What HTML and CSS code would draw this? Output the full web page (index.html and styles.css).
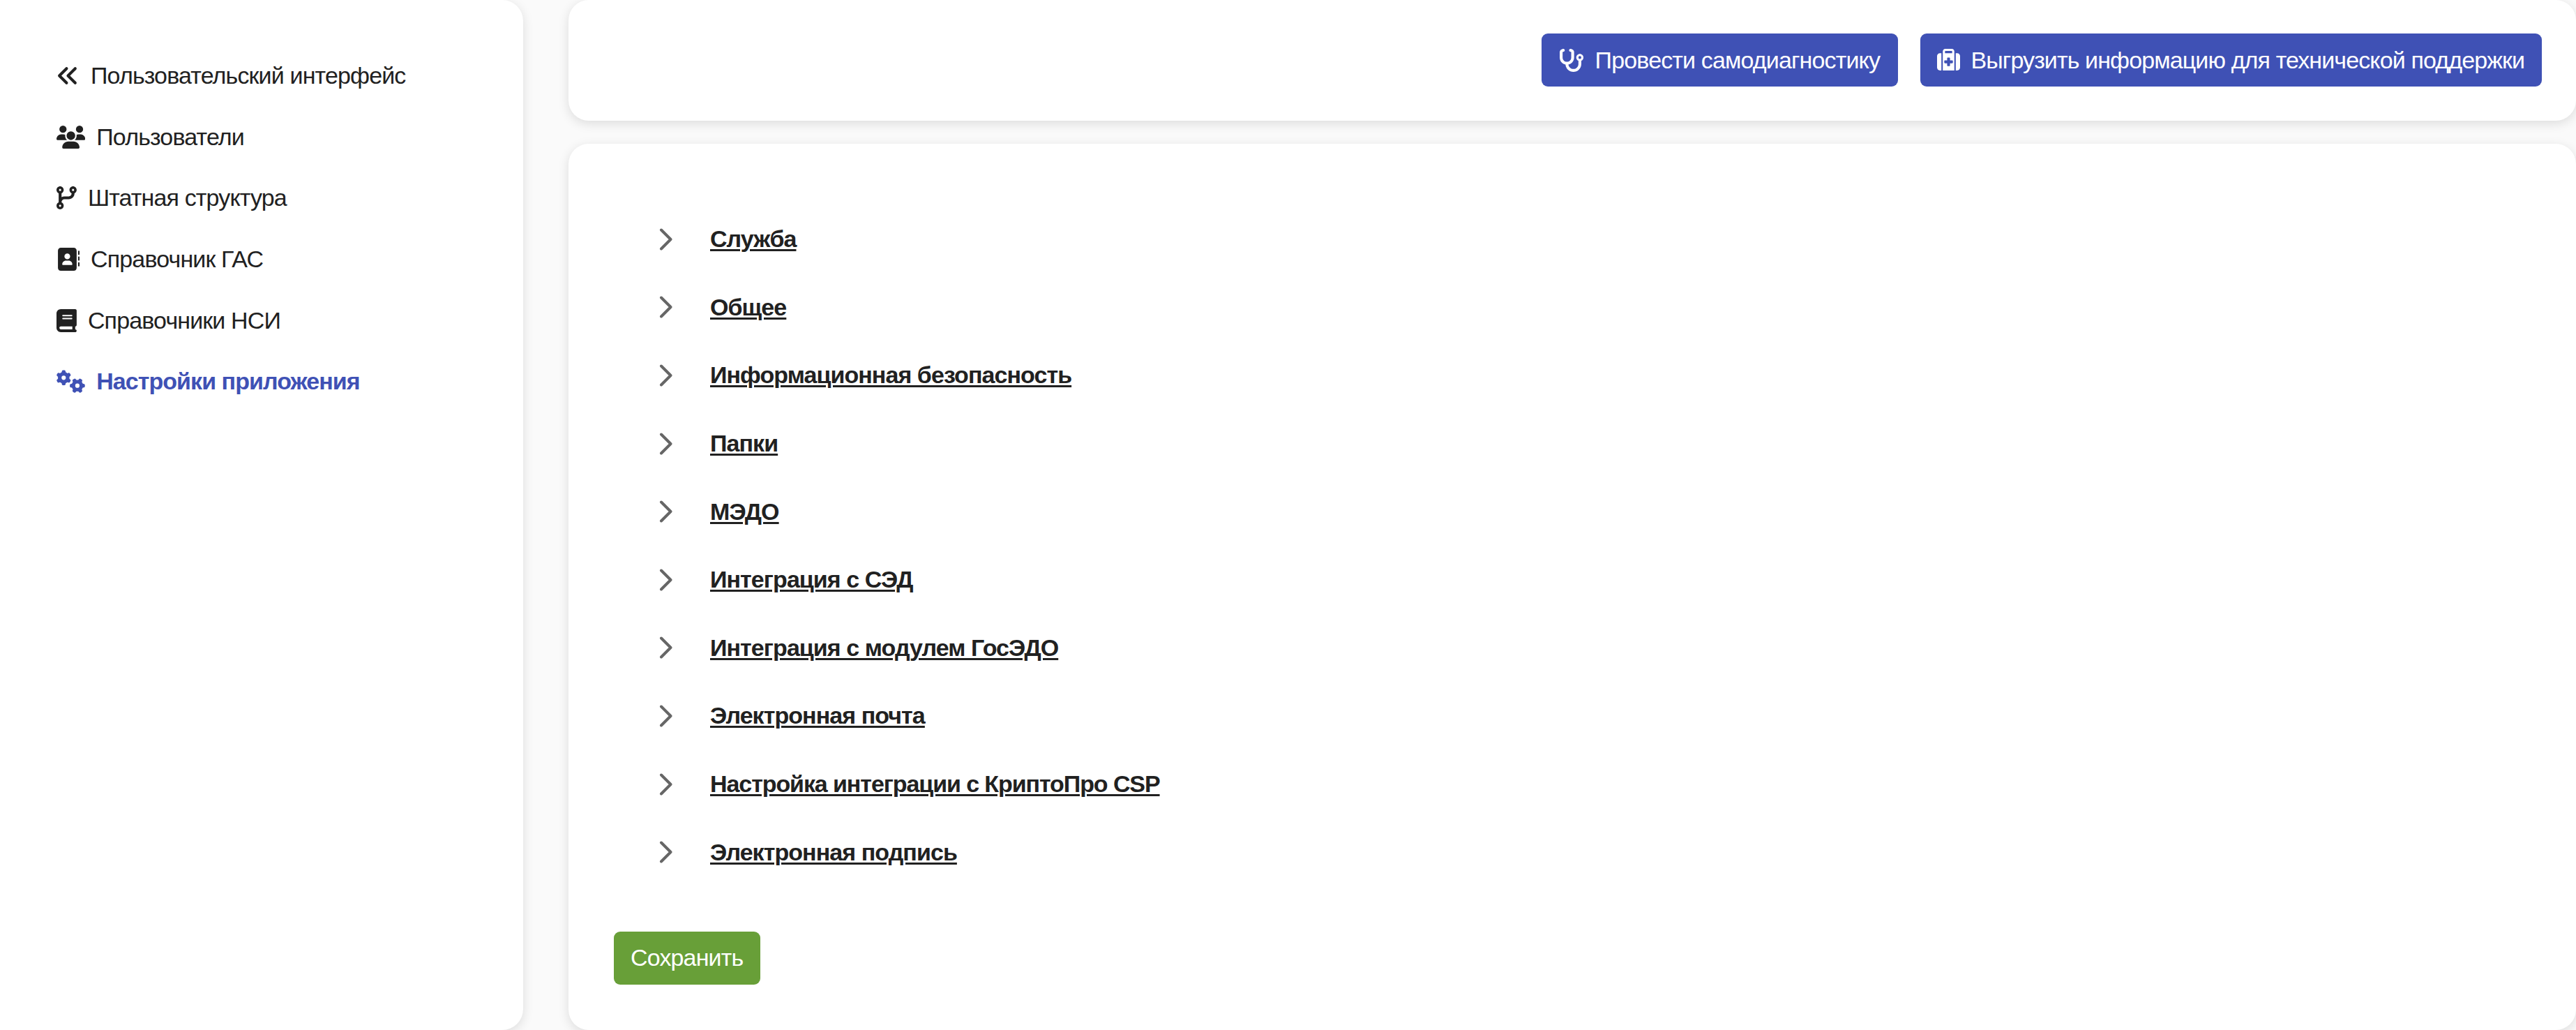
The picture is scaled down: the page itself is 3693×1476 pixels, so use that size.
FILE: index.html
```html
<!DOCTYPE html>
<html lang="ru">
<head>
<meta charset="utf-8">
<title>Настройки приложения</title>
<link rel="stylesheet" href="styles.css">
</head>
<body>
<div class="app">
  <nav class="sidebar">
    <a class="nav-item"><svg class="icon" viewBox="0 0 512 512"><path d="M41.4 233.4c-12.5 12.5-12.5 32.8 0 45.3l160 160c12.5 12.5 32.8 12.5 45.3 0s12.5-32.8 0-45.3L109.3 256 246.6 118.6c12.5-12.5 12.5-32.8 0-45.3s-32.8-12.5-45.3 0l-160 160zm352-160l-160 160c-12.5 12.5-12.5 32.8 0 45.3l160 160c12.5 12.5 32.8 12.5 45.3 0s12.5-32.8 0-45.3L301.3 256 438.6 118.6c12.5-12.5 12.5-32.8 0-45.3s-32.8-12.5-45.3 0z"/></svg><span>Пользовательский интерфейс</span></a>
    <a class="nav-item"><svg class="icon icon-wide" viewBox="0 0 640 512"><path d="M144 0a80 80 0 1 1 0 160A80 80 0 1 1 144 0zM512 0a80 80 0 1 1 0 160A80 80 0 1 1 512 0zM0 298.7C0 239.8 47.8 192 106.7 192h42.7c15.9 0 31 3.5 44.6 9.7c-1.3 7.2-1.9 14.7-1.9 22.3c0 38.2 16.8 72.5 43.3 96c-.2 0-.4 0-.7 0H21.3C9.6 320 0 310.4 0 298.7zM405.3 320c-.2 0-.4 0-.7 0c26.6-23.5 43.3-57.8 43.3-96c0-7.6-.7-15-1.9-22.3c13.6-6.3 28.7-9.7 44.6-9.7h42.7C592.2 192 640 239.8 640 298.7c0 11.8-9.6 21.3-21.3 21.3H405.3zM224 224a96 96 0 1 1 192 0 96 96 0 1 1 -192 0zM128 485.3C128 411.7 187.7 352 261.3 352H378.7C452.3 352 512 411.7 512 485.3c0 14.7-11.9 26.7-26.7 26.7H154.7c-14.7 0-26.7-11.9-26.7-26.7z"/></svg><span>Пользователи</span></a>
    <a class="nav-item"><svg class="icon icon-narrow" viewBox="0 0 448 512"><path d="M80 104a24 24 0 1 0 0-48 24 24 0 1 0 0 48zm80-24c0 32.8-19.7 61-48 73.3v87.8c18.8-10.9 40.7-17.1 64-17.1h96c35.3 0 64-28.7 64-64v-6.7C307.7 141 288 112.8 288 80c0-44.2 35.8-80 80-80s80 35.8 80 80c0 32.8-19.7 61-48 73.3V160c0 70.7-57.3 128-128 128H176c-35.3 0-64 28.7-64 64v6.7c28.3 12.3 48 40.5 48 73.3c0 44.2-35.8 80-80 80s-80-35.8-80-80c0-32.8 19.7-61 48-73.3V352 153.3C19.7 141 0 112.8 0 80C0 35.8 35.8 0 80 0s80 35.8 80 80zm232 0a24 24 0 1 0 -48 0 24 24 0 1 0 48 0zM80 456a24 24 0 1 0 0-48 24 24 0 1 0 0 48z"/></svg><span>Штатная структура</span></a>
    <a class="nav-item"><svg class="icon" viewBox="0 0 512 512"><path d="M96 0C60.7 0 32 28.7 32 64V448c0 35.3 28.7 64 64 64H384c35.3 0 64-28.7 64-64V64c0-35.3-28.7-64-64-64H96zM208 288h64c44.2 0 80 35.8 80 80c0 8.8-7.2 16-16 16H144c-8.8 0-16-7.2-16-16c0-44.2 35.8-80 80-80zm-32-96a64 64 0 1 1 128 0 64 64 0 1 1 -128 0zM512 80c0-8.8-7.2-16-16-16s-16 7.2-16 16v64c0 8.8 7.2 16 16 16s16-7.2 16-16V80zM496 192c-8.8 0-16 7.2-16 16v64c0 8.8 7.2 16 16 16s16-7.2 16-16V208c0-8.8-7.2-16-16-16zm16 144c0-8.8-7.2-16-16-16s-16 7.2-16 16v64c0 8.8 7.2 16 16 16s16-7.2 16-16V336z"/></svg><span>Справочник ГАС</span></a>
    <a class="nav-item"><svg class="icon icon-narrow" viewBox="0 0 448 512"><path d="M96 0C43 0 0 43 0 96V416c0 53 43 96 96 96H384h32c17.7 0 32-14.3 32-32s-14.3-32-32-32V384c17.7 0 32-14.3 32-32V32c0-17.7-14.3-32-32-32H384 96zm0 384H352v64H96c-17.7 0-32-14.3-32-32s14.3-32 32-32zm32-240c0-8.8 7.2-16 16-16H336c8.8 0 16 7.2 16 16s-7.2 16-16 16H144c-8.8 0-16-7.2-16-16zm16 48H336c8.8 0 16 7.2 16 16s-7.2 16-16 16H144c-8.8 0-16-7.2-16-16s7.2-16 16-16z"/></svg><span>Справочники НСИ</span></a>
    <a class="nav-item active"><svg class="icon icon-wide" viewBox="0 0 640 512"><defs><path id="gear" d="M308.5 135.3c7.1-6.3 9.9-16.2 6.2-25c-2.3-5.3-4.8-10.5-7.6-15.5L304 89.4c-3-5-6.3-9.9-9.8-14.6c-5.7-7.6-15.7-10.1-24.7-7.1l-28.2 9.3c-10.7-8.8-23-16-36.2-20.9L199 27.1c-1.9-9.3-9.1-16.7-18.5-17.8C173.9 8.4 167.2 8 160.4 8h-.7c-6.8 0-13.5 .4-20.1 1.2c-9.4 1.1-16.6 8.6-18.5 17.8L115 56.1c-13.3 5-25.5 12.1-36.2 20.9L50.5 67.8c-9-3-19-.5-24.7 7.1c-3.5 4.7-6.8 9.6-9.9 14.6l-3 5.3c-2.8 5-5.3 10.2-7.6 15.6c-3.7 8.7-.9 18.6 6.2 25l22.2 19.8C32.6 161.9 32 168.9 32 176s.6 14.1 1.7 20.9L11.5 216.7c-7.1 6.3-9.9 16.2-6.2 25c2.3 5.3 4.8 10.5 7.6 15.6l3 5.2c3 5.1 6.3 9.9 9.9 14.6c5.7 7.6 15.7 10.1 24.7 7.1l28.2-9.3c10.7 8.8 23 16 36.2 20.9l6.1 29.1c1.9 9.3 9.1 16.7 18.5 17.8c6.7 .8 13.5 1.2 20.4 1.2s13.7-.4 20.4-1.2c9.4-1.1 16.6-8.6 18.5-17.8l6.1-29.1c13.3-5 25.5-12.1 36.2-20.9l28.2 9.3c9 3 19 .5 24.7-7.1c3.5-4.7 6.8-9.5 9.8-14.6l3.1-5.4c2.8-5 5.3-10.2 7.6-15.5c3.7-8.7 .9-18.6-6.2-25l-22.2-19.8c1.1-6.8 1.7-13.8 1.7-20.9s-.6-14.1-1.7-20.9l22.2-19.8zM112 176a48 48 0 1 1 96 0 48 48 0 1 1 -96 0z"/></defs><use href="#gear"/><use href="#gear" transform="translate(464 352) rotate(90) translate(-160 -176)"/></svg><span>Настройки приложения</span></a>
  </nav>
  <main class="main">
    <header class="card toolbar">
      <button class="btn btn-primary btn-diagnose"><svg class="icon icon-medium" viewBox="0 0 576 512"><path d="M142.4 21.9c5.6 16.8-3.5 34.9-20.2 40.5L96 71.1V192c0 53 43 96 96 96s96-43 96-96V71.1l-26.1-8.7c-16.8-5.6-25.8-23.7-20.2-40.5s23.7-25.8 40.5-20.2l26.1 8.7C334.4 19.1 352 43.5 352 71.1V192c0 77.2-54.6 141.6-127.3 156.7C231 404.6 278.4 448 336 448c61.9 0 112-50.1 112-112V265.3c-28.3-12.3-48-40.5-48-73.3c0-44.2 35.8-80 80-80s80 35.8 80 80c0 32.8-19.7 61-48 73.3V336c0 97.2-78.8 176-176 176c-92.9 0-168.9-71.9-175.5-163.1C87.2 334.2 32 269.6 32 192V71.1c0-27.5 17.6-52 43.8-60.7l26.1-8.7c16.8-5.6 34.9 3.5 40.5 20.2zM480 224a32 32 0 1 0 0-64 32 32 0 1 0 0 64z"/></svg><span>Провести самодиагностику</span></button>
      <button class="btn btn-primary btn-export"><svg class="icon" viewBox="0 0 512 512"><path d="M184 48H328c4.4 0 8 3.6 8 8V96H176V56c0-4.4 3.6-8 8-8zm-56 8V96v32V480H384V128 96 56c0-30.9-25.1-56-56-56H184c-30.9 0-56 25.1-56 56zM96 96H64C28.7 96 0 124.7 0 160V416c0 35.3 28.7 64 64 64H96V96zM416 480h32c35.3 0 64-28.7 64-64V160c0-35.3-28.7-64-64-64H416V480zM224 208c0-8.8 7.2-16 16-16h32c8.8 0 16 7.2 16 16v48h48c8.8 0 16 7.2 16 16v32c0 8.8-7.2 16-16 16H288v48c0 8.8-7.2 16-16 16H240c-8.8 0-16-7.2-16-16V320H176c-8.8 0-16-7.2-16-16V272c0-8.8 7.2-16 16-16h48V208z"/></svg><span>Выгрузить информацию для технической поддержки</span></button>
    </header>
    <section class="card settings">
      <ul class="groups">
        <li class="group"><svg class="chevron" viewBox="0 0 20 32"><path d="M3 2.5 16.5 16 3 29.5"/></svg><a>Служба</a></li>
        <li class="group"><svg class="chevron" viewBox="0 0 20 32"><path d="M3 2.5 16.5 16 3 29.5"/></svg><a>Общее</a></li>
        <li class="group"><svg class="chevron" viewBox="0 0 20 32"><path d="M3 2.5 16.5 16 3 29.5"/></svg><a>Информационная безопасность</a></li>
        <li class="group"><svg class="chevron" viewBox="0 0 20 32"><path d="M3 2.5 16.5 16 3 29.5"/></svg><a>Папки</a></li>
        <li class="group"><svg class="chevron" viewBox="0 0 20 32"><path d="M3 2.5 16.5 16 3 29.5"/></svg><a>МЭДО</a></li>
        <li class="group"><svg class="chevron" viewBox="0 0 20 32"><path d="M3 2.5 16.5 16 3 29.5"/></svg><a>Интеграция с СЭД</a></li>
        <li class="group"><svg class="chevron" viewBox="0 0 20 32"><path d="M3 2.5 16.5 16 3 29.5"/></svg><a>Интеграция с модулем ГосЭДО</a></li>
        <li class="group"><svg class="chevron" viewBox="0 0 20 32"><path d="M3 2.5 16.5 16 3 29.5"/></svg><a>Электронная почта</a></li>
        <li class="group"><svg class="chevron" viewBox="0 0 20 32"><path d="M3 2.5 16.5 16 3 29.5"/></svg><a class="tight">Настройка интеграции с КриптоПро CSP</a></li>
        <li class="group"><svg class="chevron" viewBox="0 0 20 32"><path d="M3 2.5 16.5 16 3 29.5"/></svg><a>Электронная подпись</a></li>
      </ul>
      <button class="btn btn-save"><span>Сохранить</span></button>
    </section>
  </main>
</div>
</body>
</html>
```
FILE: styles.css
```css
* { box-sizing: border-box; }

body {
  margin: 0;
  background: #fafafa;
  color: #212121;
  font-family: "Liberation Sans", Arial, sans-serif;
  font-size: 34px;
  letter-spacing: -0.85px;
  white-space: nowrap;
}

.app {
  display: flex;
  gap: 65px;
  height: 1476px;
  overflow: hidden;
}

.sidebar,
.card {
  background: #fff;
  box-shadow: 0 4px 16px rgba(0, 0, 0, 0.12);
}

.sidebar {
  flex: 0 0 750px;
  padding: 64.5px 0 0 81px;
  border-radius: 0 30px 30px 0;
}

.nav-item {
  display: flex;
  align-items: center;
  gap: 16px;
  height: 87.7px;
}

.nav-item.active {
  color: #3f51b5;
  font-weight: 700;
  letter-spacing: -0.95px;
}

.icon {
  flex: none;
  width: 33px;
  height: 33px;
  fill: currentColor;
}

.icon-narrow { width: 28.9px; }
.icon-medium { width: 37.1px; }
.icon-wide { width: 41.25px; }

.main {
  flex: 1;
  display: flex;
  flex-direction: column;
  gap: 33px;
}

.card { border-radius: 29px; }

.toolbar {
  display: flex;
  justify-content: flex-end;
  align-items: flex-start;
  gap: 32px;
  height: 173px;
  padding: 48px 49px 0 0;
}

.btn {
  display: flex;
  align-items: center;
  gap: 15.5px;
  height: 76px;
  padding: 0 24px;
  border: 0;
  border-radius: 9px;
  color: #fff;
  font: inherit;
  letter-spacing: inherit;
}

.btn-primary { background: #3f51b5; }
.btn-diagnose { width: 511px; }
.btn-export { width: 891px; letter-spacing: -0.88px; }
.btn-save { width: 210px; background: #689f38; }

.settings {
  flex: 1;
  padding: 88px 65px 0;
}

.groups {
  margin: 0 0 65px;
  padding: 0;
  list-style: none;
}

.group {
  display: flex;
  align-items: center;
  gap: 53px;
  height: 97.6px;
  padding-left: 65px;
  font-weight: 700;
  letter-spacing: -0.93px;
}

.group a {
  text-decoration: underline;
  text-decoration-thickness: 3px;
  text-underline-offset: 3px;
}

.group .tight { letter-spacing: -1.08px; }

.chevron {
  flex: none;
  width: 20px;
  height: 32px;
  fill: none;
  stroke: #666;
  stroke-width: 4;
  stroke-linecap: round;
  stroke-linejoin: round;
}
```
